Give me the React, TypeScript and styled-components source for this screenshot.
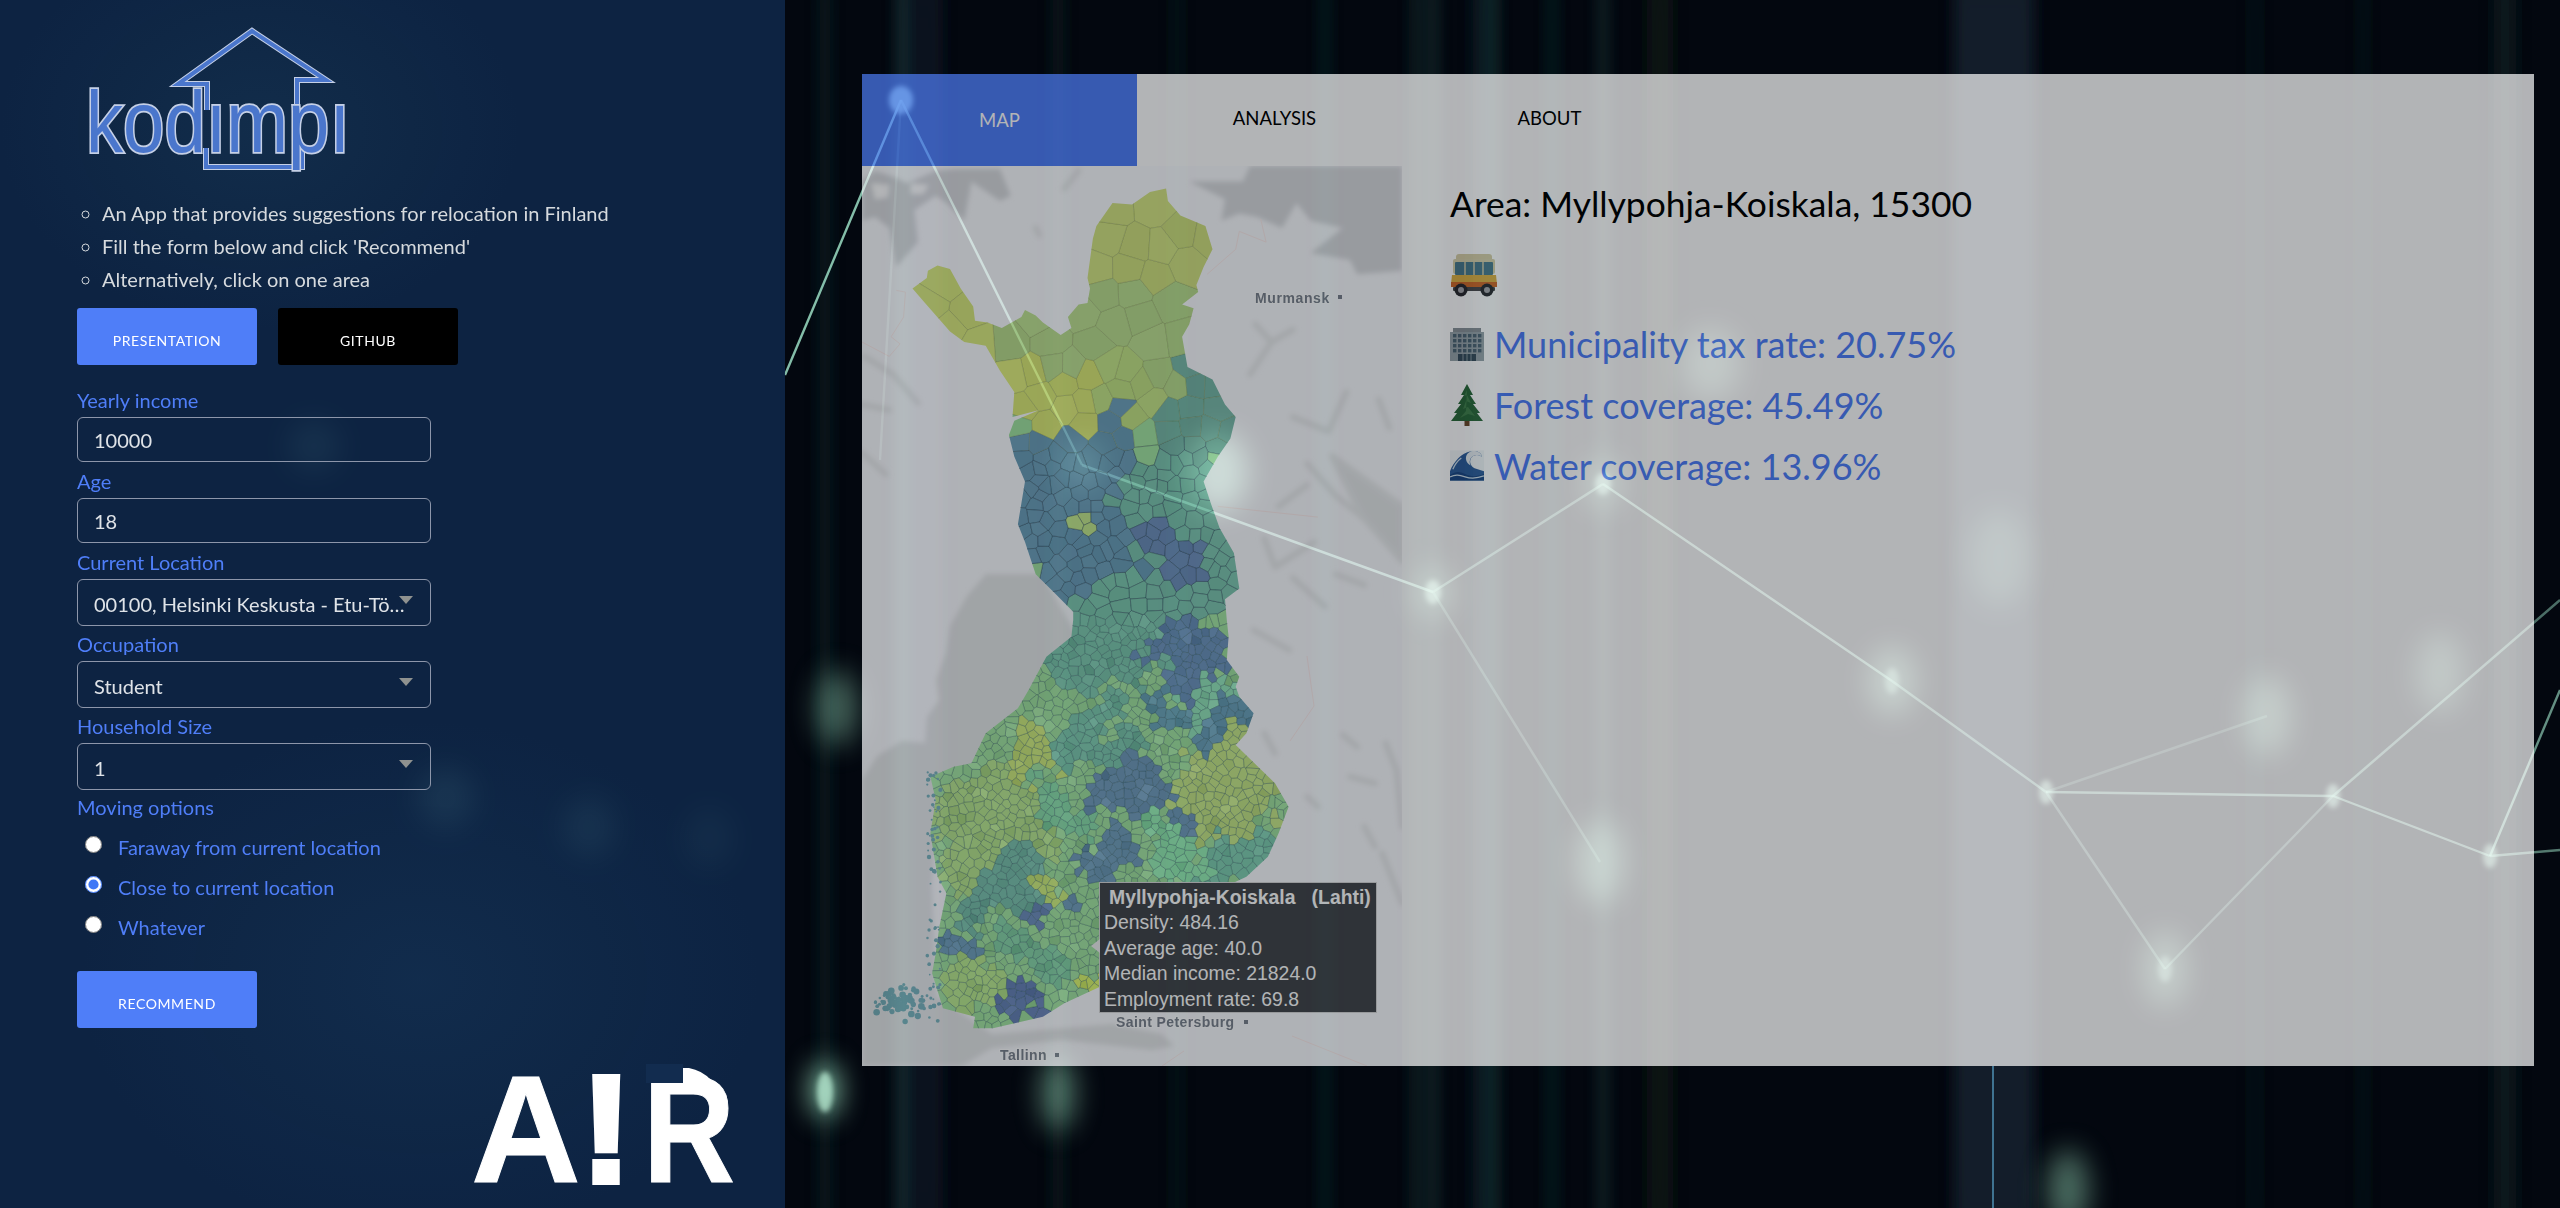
import { FC, ReactNode } from "react";
import styled, { createGlobalStyle } from "styled-components";

const GlobalStyle = createGlobalStyle`
  html, body {
    margin: 0;
    padding: 0;
    background: #03070f;
  }
  body {
    font-family: Lato, "Open Sans", sans-serif;
    overflow: hidden;
  }
`;

const BLUE = "#4f7ef8";

/* ---------- map data ---------- */

type Pt = [number, number];

// coordinates were read off crops of the map, so convert them to map pixels
const north = (p: Pt): Pt => [p[0] / 2.8 - 12, p[1] / 2.8 - 106];
const south = (p: Pt): Pt => [p[0] / 2.8 - 12, p[1] / 3 + 454];

const OUTLINE: Pt[] = [
  ...([
    [175, 640], [215, 610], [218, 590], [245, 575], [280, 585], [310, 640], [345, 690], [350, 730],
    [385, 735], [425, 750], [480, 720], [490, 700], [520, 715], [540, 735], [590, 770], [620, 750],
    [610, 720], [640, 685], [665, 680], [672, 640], [665, 610], [680, 500], [690, 465], [735, 400],
    [790, 405], [840, 370], [885, 360], [890, 395], [925, 435], [995, 465], [1015, 530], [990, 580],
    [970, 630], [975, 650], [930, 685], [962, 695], [950, 740], [930, 775], [945, 860], [1015, 895],
    [1050, 965], [1080, 1000], [1065, 1060], [1030, 1110], [990, 1180], [1010, 1240], [1035, 1310],
    [1075, 1380], [1090, 1480], [1050, 1510], [1055, 1568],
  ] as Pt[]).map(north),
  ...([
    [1060, 50], [1055, 120], [1090, 170], [1080, 200], [1090, 230], [1130, 280], [1110, 340],
    [1080, 375], [1190, 490], [1228, 560], [1200, 640], [1170, 710], [1110, 770], [1050, 800],
    [900, 950], [700, 1100], [600, 1150], [540, 1190], [400, 1225], [345, 1225], [350, 1190],
    [260, 1165], [230, 1060], [240, 1000], [250, 920], [270, 820], [245, 770], [225, 640],
    [240, 540], [225, 470], [290, 440], [340, 430], [380, 340], [470, 265], [500, 210], [550, 110],
    [620, 50], [625, 0],
  ] as Pt[]).map(south),
  ...([
    [625, 1545], [570, 1490], [520, 1440], [490, 1350], [470, 1300], [490, 1180], [460, 1110],
    [445, 1050], [460, 1010], [530, 980], [455, 1000], [460, 930], [420, 870], [380, 800], [320, 790],
    [280, 760], [210, 680],
  ] as Pt[]).map(north),
];

const inOutline = (x: number, y: number) => {
  let inside = false;
  for (let i = 0, j = OUTLINE.length - 1; i < OUTLINE.length; j = i++) {
    const [xi, yi] = OUTLINE[i];
    const [xj, yj] = OUTLINE[j];
    if (yi > y !== yj > y && x < ((xj - xi) * (y - yi)) / (yj - yi) + xi) inside = !inside;
  }
  return inside;
};

let seed = 7;
const rnd = () => {
  seed = (seed * 16807) % 2147483647;
  return seed / 2147483647;
};

// [cx, cy, rx, ry, colour]; a later blob paints over an earlier one
const BLOBS: [number, number, number, number, string][] = [
  [270, 60, 140, 80, "#95a25f"],
  [110, 170, 110, 70, "#99a65c"],
  [260, 170, 110, 48, "#86a06a"],
  [195, 240, 60, 40, "#9da95a"],
  [260, 235, 45, 42, "#8ca464"],
  [340, 250, 52, 52, "#56847a"],
  [215, 345, 78, 95, "#4f7488"],
  [325, 370, 58, 92, "#5a8e80"],
  [305, 385, 26, 28, "#4f6888"],
  [229, 342, 12, 16, "#8aa668"],
  [325, 480, 52, 40, "#4f6c8a"],
  [240, 470, 70, 55, "#5b9180"],
  [340, 530, 30, 22, "#6aa488"],
  [363, 553, 30, 25, "#4f7689"],
  [293, 548, 18, 20, "#507a89"],
  [370, 625, 56, 56, "#8da665"],
  [360, 700, 50, 26, "#5d9582"],
  [175, 590, 28, 36, "#93a95e"],
  [125, 660, 60, 60, "#83a56a"],
  [280, 630, 45, 30, "#527189"],
  [235, 695, 28, 28, "#527389"],
  [305, 680, 30, 28, "#6cab84"],
  [145, 725, 40, 35, "#588b7e"],
  [186, 720, 14, 20, "#93ab5e"],
  [185, 750, 15, 13, "#4f6789"],
  [98, 773, 22, 14, "#517389"],
  [105, 812, 30, 28, "#84a76a"],
  [170, 790, 32, 22, "#62997c"],
  [150, 842, 26, 15, "#4c6187"],
  [222, 815, 15, 14, "#9bb052"],
  [215, 560, 30, 30, "#5d9482"],
  [205, 640, 24, 24, "#65a07e"],
  [255, 590, 24, 18, "#5a907f"],
];

// the panel fades everything to 70%, so undo that for colours picked from the screenshot
const unfade = (hex: string, amount = 0) => {
  const bg = [4, 9, 16];
  const parts = [1, 3, 5].map((i, k) => {
    const v = (parseInt(hex.slice(i, i + 2), 16) - bg[k] * 0.3) / 0.7 + amount;
    return Math.max(0, Math.min(255, Math.round(v)));
  });
  return `rgb(${parts.join(",")})`;
};

const clipCell = (p: Pt, others: Pt[]) => {
  let poly: Pt[] = [[p[0] - 70, p[1] - 70], [p[0] + 70, p[1] - 70], [p[0] + 70, p[1] + 70], [p[0] - 70, p[1] + 70]];
  for (const q of others) {
    if (q === p) continue;
    const dx = q[0] - p[0];
    const dy = q[1] - p[1];
    if (dx * dx + dy * dy > 20000) continue;
    const limit = (dx * (p[0] + q[0])) / 2 + (dy * (p[1] + q[1])) / 2;
    const next: Pt[] = [];
    poly.forEach((a, i) => {
      const b = poly[(i + 1) % poly.length];
      const da = dx * a[0] + dy * a[1] - limit;
      const db = dx * b[0] + dy * b[1] - limit;
      if (da <= 0) next.push(a);
      if (da * db < 0) {
        const t = da / (da - db);
        next.push([a[0] + (b[0] - a[0]) * t, a[1] + (b[1] - a[1]) * t]);
      }
    });
    poly = next;
    if (!poly.length) break;
  }
  return poly;
};

const spacing = (y: number) => (y < 200 ? 30 : y < 290 ? 20 : y < 455 ? 12 : 6.5);

const buildCells = () => {
  const points: Pt[] = [];
  for (let i = 0; i < 40000; i++) {
    const x = rnd() * 430;
    const y = rnd() * 880;
    if (!inOutline(x, y)) continue;
    const r = spacing(y) * (0.75 + rnd() * 0.6);
    if (points.some((q) => (q[0] - x) ** 2 + (q[1] - y) ** 2 < r * r)) continue;
    points.push([x, y]);
  }
  return points.map((p) => {
    // wobble the lookup so the colour patches get ragged edges instead of ellipses
    const jx = p[0] + (rnd() - 0.5) * 12 + 13 * Math.sin(p[1] / 23) + 8 * Math.sin(p[1] / 9 + p[0] / 17);
    const jy = p[1] + (rnd() - 0.5) * 12 + 13 * Math.sin(p[0] / 19) + 8 * Math.cos(p[0] / 8 - p[1] / 21);
    let fill = "#74a376";
    BLOBS.forEach(([cx, cy, rx, ry, c]) => {
      if (((jx - cx) / rx) ** 2 + ((jy - cy) / ry) ** 2 < 1) fill = c;
    });
    const mottled = p[1] > 455 && rnd() < 0.25;
    return {
      d: clipCell(p, points).map((v) => v.map((n) => n.toFixed(1)).join(",")).join(" "),
      fill: unfade(fill, (rnd() - 0.5) * (mottled ? 36 : 8)),
      line: p[1] < 280 ? "rgba(95,115,40,0.3)" : p[1] < 455 ? "rgba(25,55,75,0.5)" : "rgba(25,70,80,0.36)",
    };
  });
};

const CELLS = buildCells();

const ISLANDS = [
  ...Array.from({ length: 110 }, () => {
    const a = rnd() * 6.28;
    const r = rnd() * rnd() + 0.1;
    return { x: 38 + Math.cos(a) * r * 38, y: 836 + Math.sin(a) * r * 20, r: 1 + rnd() * 2.4 };
  }),
  ...Array.from({ length: 70 }, () => {
    const t = rnd();
    return { x: 72 + (rnd() - 0.5) * 14, y: 600 + t * 260, r: 0.8 + rnd() * 1.4 };
  }),
];

const toPath = (pts: Pt[], convert: (p: Pt) => Pt, close = false) =>
  "M" + pts.map(convert).map((p) => p.map((n) => n.toFixed(1)).join(" ")).join("L") + (close ? "Z" : "");

const SEA_NORTH: Pt[] = [
  [950, 340], [1050, 390], [1040, 450], [1090, 430], [1140, 440], [1210, 470], [1250, 400], [1290, 450],
  [1380, 470], [1290, 540], [1400, 560], [1420, 600], [1546, 590], [1546, 297], [1120, 297], [1100, 340],
];
const FJORD_LAND: Pt[] = [
  [34, 340], [70, 310], [130, 330], [160, 345], [240, 310], [300, 305], [420, 305], [450, 380], [420, 395],
  [340, 340], [320, 450], [270, 400], [240, 380], [180, 420], [190, 510], [130, 580], [110, 470], [70, 440], [34, 450],
];
const FJORD_HOLES: Pt[][] = [
  [[60, 345], [110, 350], [105, 385], [70, 390]],
  [[170, 345], [220, 350], [205, 375], [170, 375]],
];
const FJORDS: Pt[][] = [
  [[600, 360], [640, 310]],
  [[520, 470], [530, 490]],
  [[40, 830], [120, 880], [190, 960]],
  [[34, 965], [110, 980]],
  [[34, 1100], [100, 1160]],
  [[1135, 740], [1180, 790], [1240, 755]],
  [[1180, 790], [1120, 880]],
  [[1240, 1000], [1340, 1040], [1390, 930]],
  [[1480, 950], [1510, 1030]],
  [[1280, 1130], [1360, 1220], [1546, 1370]],
  [[1200, 1250], [1280, 1190]],
  [[1160, 1340], [1190, 1420], [1300, 1350]],
  [[1240, 1450], [1330, 1530]],
  [[1360, 1440], [1440, 1470]],
];
const EAST_LAKES: Pt[][] = [
  [[1130, 30], [1230, 90]],
  [[1380, 345], [1420, 380]],
  [[1400, 470], [1470, 490]],
  [[1500, 370], [1530, 450], [1546, 620]],
  [[1440, 620], [1470, 680]],
  [[1490, 700], [1546, 850]],
  [[1160, 340], [1190, 400]],
  [[1280, 530], [1310, 560]],
];
const BORDERS: Pt[][] = [
  [[130, 645], [155, 650], [150, 720], [115, 775], [140, 795], [110, 830], [34, 790]],
  [[1000, 600], [1080, 530], [1090, 480], [1165, 510], [1150, 445]],
  [[1030, 1250], [1310, 1280]],
];

/* ---------- layout ---------- */

const Backdrop = styled.svg`
  position: absolute;
  top: 0;
  left: 0;
`;

const Page = styled.div`
  position: relative;
  z-index: 1;
  display: flex;
  width: 2560px;
  height: 1208px;
`;

const Sidebar = styled.aside`
  display: flex;
  flex-direction: column;
  width: 785px;
  height: 1208px;
  box-sizing: border-box;
  padding: 26px 0 0 77px;
  background:
    radial-gradient(ellipse 260px 200px at 260px 130px, rgba(30, 70, 100, 0.28), transparent),
    radial-gradient(ellipse 340px 260px at 420px 980px, rgba(30, 70, 110, 0.25), transparent),
    rgba(14, 38, 70, 0.93);
`;

const LogoMark = styled.svg`
  display: block;
  margin-left: 8px;
  flex: none;
`;

const IntroList = styled.ul`
  list-style: circle;
  margin: 24.5px 0 12px;
  padding: 0 0 0 25px;
  color: #d6dade;
  font-size: 20px;
  line-height: 33.3px;
`;

const ButtonRow = styled.div`
  display: flex;
  gap: 21px;
`;

const ActionButton = styled.button<{ $dark?: boolean }>`
  width: 180px;
  height: 57px;
  padding: 7px 0 0;
  border: 0;
  border-radius: 3px;
  background: ${(p) => (p.$dark ? "#000" : BLUE)};
  color: #fff;
  font-family: inherit;
  font-size: 14px;
  letter-spacing: 0.6px;
  text-transform: uppercase;
`;

const FieldLabel = styled.label<{ $select?: boolean }>`
  display: block;
  height: ${(p) => (p.$select ? "35px" : "36px")};
  padding-top: ${(p) => (p.$select ? "3px" : "4px")};
  box-sizing: border-box;
  color: ${BLUE};
  font-size: 20px;
  line-height: 30px;
`;

const FormGroup = styled.div`
  margin-top: 24px;
  & > label:first-child {
    height: 28px;
    padding-top: 0;
    line-height: 23px;
  }
`;

const TextBox = styled.input`
  display: block;
  width: 354px;
  height: 45px;
  box-sizing: border-box;
  padding: 0 16px;
  border: 1px solid #8d96aa;
  border-radius: 6px;
  background: transparent;
  color: #dfe3e8;
  font-family: inherit;
  font-size: 20px;
  outline: none;
`;

const SelectBox = styled.div`
  position: relative;
  width: 354px;
  height: 47px;
  box-sizing: border-box;
  padding: 4px 16px 0;
  border: 1px solid #8d96aa;
  border-radius: 6px;
  color: #dfe3e8;
  font-size: 20px;
  line-height: 41px;
  &::after {
    content: "";
    position: absolute;
    top: 16px;
    right: 17px;
    border-style: solid;
    border-width: 8px 7px 0;
    border-color: #8f9290 transparent transparent;
  }
`;

const SelectValue = styled.div`
  white-space: nowrap;
  overflow: hidden;
  text-overflow: ellipsis;
`;

const MovingLabel = styled.div`
  height: 38px;
  color: ${BLUE};
  font-size: 20px;
  line-height: 34px;
`;

const RadioRow = styled.label`
  display: flex;
  align-items: center;
  gap: 16px;
  height: 40px;
  padding: 0 0 2px 8px;
  box-sizing: border-box;
  color: ${BLUE};
  font-size: 20px;
`;

const RadioDot = styled.input`
  width: 17px;
  height: 17px;
  margin: 0 0 6px;
  accent-color: #3f78f6;
`;

const RecommendButton = styled(ActionButton)`
  margin-top: 23px;
  flex: none;
`;

const AirLogo = styled.svg`
  display: block;
  margin: 36px 0 0 389px;
  flex: none;
`;

const Main = styled.main`
  flex: 1;
  padding: 74px 26px 0 77px;
`;

const Panel = styled.section`
  height: 992px;
  background: #fff;
  opacity: 0.7;
`;

const TabBar = styled.nav`
  display: flex;
  height: 92px;
`;

const Tab = styled.div<{ $active?: boolean }>`
  display: flex;
  align-items: center;
  justify-content: center;
  width: 275px;
  padding-bottom: ${(p) => (p.$active ? "0" : "4px")};
  box-sizing: border-box;
  background: ${(p) => (p.$active ? BLUE : "transparent")};
  color: ${(p) => (p.$active ? "#fff" : "#000")};
  font-size: 18.5px;
`;

const Content = styled.div`
  display: flex;
  height: 900px;
`;

const MapPane = styled.div`
  position: relative;
  flex: none;
  width: 540px;
  height: 900px;
  overflow: hidden;
  background: #fbfcff;
  svg {
    display: block;
  }
`;

const Tooltip = styled.div`
  position: absolute;
  left: 237px;
  top: 716px;
  width: 278px;
  height: 131px;
  box-sizing: border-box;
  padding: 2px 0 0 4px;
  border: 1px solid #d8d8d8;
  background: #44474b;
  color: #fff;
  font-family: "Liberation Sans", Arial, sans-serif;
  font-size: 19.4px;
  line-height: 25.4px;
  &::before {
    content: "";
    position: absolute;
    left: -9px;
    top: 56px;
    border-style: solid;
    border-width: 7px 9px 7px 0;
    border-color: transparent #f0f0f0 transparent transparent;
  }
`;

const TooltipTitle = styled.div`
  padding-left: 5px;
  font-weight: 700;
  white-space: pre;
`;

const Details = styled.div`
  padding: 16px 0 0 48px;
`;

const AreaTitle = styled.h2`
  margin: 0;
  height: 42px;
  color: #000;
  font-size: 35.4px;
  font-weight: 400;
  line-height: 44px;
`;

const BusSlot = styled.div`
  margin: 29px 0 16px;
  height: 44px;
  svg {
    display: block;
  }
`;

const StatRow = styled.div`
  display: flex;
  align-items: center;
  gap: 10px;
  height: 61px;
  color: ${BLUE};
  font-size: 36px;
  svg {
    flex: none;
  }
`;

/* ---------- drawings ---------- */

const Network: FC = () => {
  const lines: [number, number, number, number, number][] = [
    [901, 100, 1082, 465, 0.55], [1082, 465, 1433, 592, 0.6], [901, 100, 785, 375, 0.8],
    [901, 100, 1010, 320, 0.22], [901, 100, 880, 460, 0.16],
    [1433, 592, 1603, 484, 0.4], [1603, 484, 1892, 681, 0.5], [1892, 681, 2046, 792, 0.45], [2046, 792, 2333, 796, 0.5],
    [2333, 796, 2490, 856, 0.5], [2046, 792, 2165, 969, 0.3], [2333, 796, 2165, 969, 0.3], [2333, 796, 2560, 600, 0.45],
    [2490, 856, 2560, 690, 0.6], [2490, 856, 2560, 850, 0.5], [1433, 592, 1600, 862, 0.25], [2046, 792, 2267, 716, 0.22],
  ];
  const streaks: [number, number, string, number][] = [
    [825, 12, "#17453f", 0.32],
    [920, 46, "#122f3c", 0.35],
    [1058, 12, "#163f37", 0.28],
    [1177, 7, "#12302a", 0.45],
    [1325, 7, "#1a453c", 0.5],
    [1416, 7, "#1f5046", 0.5],
    [1484, 22, "#16333a", 0.45],
    [1495, 5, "#255f52", 0.5],
    [1552, 7, "#1a453c", 0.5],
    [1660, 26, "#10211a", 0.5],
    [1994, 80, "#1a2f3a", 0.6],
    [2255, 6, "#16322a", 0.5],
    [2363, 5, "#183a2c", 0.5],
    [2505, 22, "#13282c", 0.55],
    [901, 8, "#3a7a70", 0.3],
    [1433, 10, "#3a7a6a", 0.28],
    [1603, 10, "#3a7a6a", 0.25],
  ];
  const glows: [number, number, number, number, number][] = [
    [1218, 472, 30, 40, 0.6], [1600, 862, 24, 42, 0.42], [2267, 716, 24, 40, 0.36], [2440, 673, 24, 40, 0.3],
    [1999, 558, 30, 48, 0.22], [1711, 364, 30, 36, 0.3], [1892, 681, 24, 34, 0.4], [2165, 969, 22, 38, 0.36],
    [837, 708, 20, 38, 0.4], [1058, 1093, 16, 38, 0.5], [2068, 1190, 20, 40, 0.45], [1433, 592, 20, 26, 0.35],
    [1603, 484, 20, 26, 0.32], [314, 446, 26, 26, 0.75], [446, 798, 28, 30, 0.9], [589, 827, 26, 30, 0.75],
    [709, 838, 24, 30, 0.5], [1082, 465, 20, 24, 0.4], [825, 1090, 13, 28, 0.85],
  ];
  const nodes: [number, number, number, number, number][] = [
    [1433, 592, 8, 12, 0.6], [1603, 484, 8, 11, 0.55], [1892, 681, 7, 13, 0.4], [2046, 792, 7, 12, 0.55],
    [2333, 796, 7, 12, 0.55], [2490, 856, 7, 12, 0.55], [2165, 969, 7, 13, 0.4], [825, 1092, 8, 20, 0.7], [901, 100, 12, 14, 0.8],
  ];
  return (
    <Backdrop width={2560} height={1208} viewBox="0 0 2560 1208">
      <defs>
        <filter id="streak" x="-300%" y="-20%" width="700%" height="140%">
          <feGaussianBlur stdDeviation="7 40" />
        </filter>
        <filter id="glow" x="-100%" y="-100%" width="300%" height="300%">
          <feGaussianBlur stdDeviation="14" />
        </filter>
        <filter id="soft" x="-100%" y="-100%" width="300%" height="300%">
          <feGaussianBlur stdDeviation="2.5" />
        </filter>
        <filter id="faint" x="-5%" y="-5%" width="110%" height="110%">
          <feGaussianBlur stdDeviation="0.5" />
        </filter>
      </defs>
      <rect width={2560} height={1208} fill="#03070f" />
      <g filter="url(#streak)">
        {streaks.map(([x, w, c, o]) => (
          <rect key={x} x={x - w / 2} y={-60} width={w} height={1330} fill={c} opacity={o} />
        ))}
      </g>
      <rect x={1992} y={1066} width={2} height={142} fill="#3f7391" />
      <g stroke="#a5ecd0" strokeWidth={2.4}>
        {lines.map(([a, b, c, d, o]) => (
          <line key={`${a}-${b}-${c}-${d}`} x1={a} y1={b} x2={c} y2={d} opacity={o} />
        ))}
      </g>
      <g filter="url(#glow)" fill="#a8f0cc">
        {glows.map(([x, y, rx, ry, o]) => (
          <ellipse key={`${x}-${y}`} cx={x} cy={y} rx={rx} ry={ry} opacity={o} />
        ))}
      </g>
      <g filter="url(#soft)" fill="#c0f5dc">
        {nodes.map(([x, y, rx, ry, o]) => (
          <ellipse key={`${x}-${y}`} cx={x} cy={y} rx={rx} ry={ry} opacity={o} />
        ))}
      </g>
    </Backdrop>
  );
};

const KodimpiLogo: FC = () => (
  <LogoMark width={268} height={146} viewBox="0 0 268 146">
    <g fill="none" strokeLinejoin="miter">
      <path d="M122 84V58H93L167 5L241 54H212V78M121 122V141H217V118" stroke="#c5d0e6" strokeWidth={6} />
      <path d="M122 84V58H93L167 5L241 54H212V78M121 122V141H217V118" stroke="#4a76cc" strokeWidth={4} />
    </g>
    <text
      x={1}
      y={126}
      fontFamily="'Liberation Sans', Arial, sans-serif"
      fontSize={88}
      fill="#4a76cc"
      stroke="#c5d0e6"
      strokeWidth={3.6}
      paintOrder="stroke"
      textLength={264}
      lengthAdjust="spacingAndGlyphs"
    >
      kodımpı
    </text>
  </LogoMark>
);

const AirMark: FC = () => (
  <AirLogo width={270} height={122} viewBox="0 0 270 122">
    <g fill="#fff" stroke="#fff" fontFamily="'Liberation Sans', Arial, sans-serif" fontWeight={700} fontSize={152}>
      <text x={5} y={118} strokeWidth={1}>A</text>
      <text x={115} y={118} strokeWidth={6} strokeLinejoin="miter">!</text>
      <text x={177} y={118} strokeWidth={1} textLength={92} lengthAdjust="spacingAndGlyphs">R</text>
    </g>
    <rect x={180} y={0} width={37} height={19} fill="#122c4f" />
    <path d="M217 4h6a40 40 0 0 1 22 12h-28z" fill="#fff" />
  </AirLogo>
);

const BusIcon: FC = () => (
  <svg width={48} height={44} viewBox="0 0 48 44">
    <path d="M9 1h30q3 0 3 3v4H6V4q0-3 3-3z" fill="#d8d0a8" />
    <rect x={3} y={6} width={42} height={15} rx={2} fill="#d9d2ac" />
    <rect x={5} y={9} width={38} height={13} rx={1} fill="#4b7b8f" />
    <path d="M15 9v13M24 9v13M33 9v13" stroke="#d9d2ac" strokeWidth={1.4} />
    <path d="M2 22h44l1 9H1z" fill="#dfb245" />
    <rect x={1} y={29} width={46} height={5} fill="#d06a2a" />
    <rect x={3} y={34} width={42} height={4} rx={1} fill="#4a4a4c" />
    <circle cx={11} cy={37} r={6.5} fill="#2c2c30" />
    <circle cx={11} cy={37} r={3} fill="#a8a8ac" />
    <circle cx={37} cy={37} r={6.5} fill="#2c2c30" />
    <circle cx={37} cy={37} r={3} fill="#a8a8ac" />
  </svg>
);

const BuildingIcon: FC = () => {
  const cols = [3, 8, 13, 18, 23, 28];
  const rows = [7, 12, 17, 22];
  return (
    <svg width={34} height={34} viewBox="0 0 34 34">
      <rect x={3} y={1} width={28} height={5} fill="#8c949a" />
      <rect x={0} y={5} width={34} height={29} fill="#9aa6ac" />
      {rows.map((y) =>
        cols.map((x) => <rect key={`${x}-${y}`} x={x} y={y} width={3.4} height={3.4} fill="#4e6675" />)
      )}
      <rect x={8} y={27} width={18} height={7} fill="#38505e" />
      <path d="M13 27v7M17 27v7M21 27v7" stroke="#a4b0b6" strokeWidth={0.8} />
    </svg>
  );
};

const TreeIcon: FC = () => (
  <svg width={34} height={42} viewBox="0 0 34 42">
    <rect x={14.5} y={35} width={5} height={7} fill="#6e4a2c" />
    <path d="M17 0l6 11h-3l6 9h-3l7 9h-3l6 8H1l6-8H4l7-9H8l6-9h-3z" fill="#2c6a3a" />
    <path d="M17 6l-3 6 3-1 4 8-5-2-3 8 5-2 7 9-7-2-8 4 6-7" fill="#4f8f56" opacity={0.7} />
  </svg>
);

const WaveIcon: FC = () => (
  <svg width={34} height={31} viewBox="0 0 36 32">
    <rect width={36} height={32} fill="#d9e4ea" opacity={0.35} />
    <path d="M0 32V22C4 12 12 3 22 1c6-1 11 1 12 6-3-3-8-3-11 0-3 4-2 9 3 12l10 3v10z" fill="#2f5f9c" />
    <path d="M22 1c6-1 11 1 12 6-3-3-8-3-11 0-2 2-3 6-1 9-5-2-7-9-3-13z" fill="#e8eef2" />
    <path d="M0 26c6-4 10-4 16-1s12 3 20 0v7H0z" fill="#1d4a86" />
    <path d="M0 28c6-3 10-2 16 0s12 2 20-1M3 20c2-5 5-9 9-12" stroke="#cfe0ec" strokeWidth={1.3} fill="none" />
  </svg>
);

const FinlandMap: FC = () => (
  <svg width={540} height={900} viewBox="0 0 540 900">
    <defs>
      <clipPath id="finland">
        <path d={toPath(OUTLINE, (p) => p, true)} />
      </clipPath>
    </defs>
    <g filter="url(#soft)">
      <path
        d="M0 614L15 590L40 575L63 577L65 551L77 534L74 514L84 487L88 460L105 430L124 408L180 408L215 470L180 530L125 600L75 650L70 720L75 830L130 868L250 858L300 868L312 880L290 884L200 874L130 882L100 900L0 900Z"
        fill={unfade("#a2a5a8")}
      />
      <path d={toPath(SEA_NORTH, north, true)} fill={unfade("#9a9da1")} />
      <path d={toPath(FJORD_LAND, north, true)} fill={unfade("#9a9da1")} />
      {FJORD_HOLES.map((f, i) => (
        <path key={i} d={toPath(f, north, true)} fill={unfade("#b6b8bb")} />
      ))}
      <g fill="none" stroke={unfade("#a5a8ab")} strokeWidth={6} strokeLinejoin="round" strokeLinecap="round">
        {FJORDS.map((f, i) => (
          <path key={i} d={toPath(f, north)} />
        ))}
        {EAST_LAKES.map((f, i) => (
          <path key={i} d={toPath(f, south)} />
        ))}
        <path d="M470 290L540 340L540 395L500 350Z" fill={unfade("#a2a5a8")} />
      </g>
    </g>
    <g fill="none" stroke={unfade("#b9a9ab")} strokeWidth={1}>
      {BORDERS.map((b, i) => (
        <path key={i} d={toPath(b, north)} />
      ))}
      <path d="M445 490L452 540L428 575M300 900L322 885M430 870L505 900" />
    </g>
    <g filter="url(#faint)">
      <g clipPath="url(#finland)" strokeWidth={0.7}>
        {CELLS.map((c, i) => (
          <polygon key={i} points={c.d} fill={c.fill} stroke={c.line} />
        ))}
      </g>
      <g fill={unfade("#567f88")}>
        {ISLANDS.map((d, i) => (
          <circle key={i} cx={d.x} cy={d.y} r={d.r} />
        ))}
      </g>
    </g>
    <g fontFamily="'Liberation Sans', Arial, sans-serif" fontWeight={700} fontSize={14} fill="#7c838e" stroke="#fff" strokeWidth={2} paintOrder="stroke">
      <text x={393} y={137} letterSpacing={0.6}>Murmansk</text>
      <text x={254} y={861} letterSpacing={0.4}>Saint Petersburg</text>
      <text x={138} y={894} letterSpacing={0.4}>Tallinn</text>
    </g>
    <g fill="#7c838e">
      <rect x={476} y={129} width={4} height={4} />
      <rect x={382} y={854} width={4} height={4} />
      <rect x={193} y={887} width={4} height={4} />
    </g>
  </svg>
);

const Stat: FC<{ icon: ReactNode; children: ReactNode }> = ({ icon, children }) => (
  <StatRow>
    {icon}
    <span>{children}</span>
  </StatRow>
);

const MOVING_OPTIONS = ["Faraway from current location", "Close to current location", "Whatever"];

const App: FC = () => {
  return (
    <>
      <GlobalStyle />
      <Network />
      <Page>
        <Sidebar>
          <KodimpiLogo />
          <IntroList>
            <li>An App that provides suggestions for relocation in Finland</li>
            <li>Fill the form below and click 'Recommend'</li>
            <li>Alternatively, click on one area</li>
          </IntroList>
          <ButtonRow>
            <ActionButton>Presentation</ActionButton>
            <ActionButton $dark>Github</ActionButton>
          </ButtonRow>
          <FormGroup>
            <FieldLabel>Yearly income</FieldLabel>
            <TextBox defaultValue="10000" />
            <FieldLabel>Age</FieldLabel>
            <TextBox defaultValue="18" />
            <FieldLabel>Current Location</FieldLabel>
            <SelectBox>
              <SelectValue>00100, Helsinki Keskusta - Etu-Töölö</SelectValue>
            </SelectBox>
            <FieldLabel $select>Occupation</FieldLabel>
            <SelectBox>
              <SelectValue>Student</SelectValue>
            </SelectBox>
            <FieldLabel $select>Household Size</FieldLabel>
            <SelectBox>
              <SelectValue>1</SelectValue>
            </SelectBox>
          </FormGroup>
          <MovingLabel>Moving options</MovingLabel>
          {MOVING_OPTIONS.map((option, i) => (
            <RadioRow key={option}>
              <RadioDot type="radio" name="moving" defaultChecked={i === 1} />
              {option}
            </RadioRow>
          ))}
          <RecommendButton>Recommend</RecommendButton>
          <AirMark />
        </Sidebar>
        <Main>
          <Panel>
            <TabBar>
              <Tab $active>MAP</Tab>
              <Tab>ANALYSIS</Tab>
              <Tab>ABOUT</Tab>
            </TabBar>
            <Content>
              <MapPane>
                <FinlandMap />
                <Tooltip>
                  <TooltipTitle>{"Myllypohja-Koiskala   (Lahti)"}</TooltipTitle>
                  <div>Density: 484.16</div>
                  <div>Average age: 40.0</div>
                  <div>Median income: 21824.0</div>
                  <div>Employment rate: 69.8</div>
                </Tooltip>
              </MapPane>
              <Details>
                <AreaTitle>Area: Myllypohja-Koiskala, 15300</AreaTitle>
                <BusSlot>
                  <BusIcon />
                </BusSlot>
                <Stat icon={<BuildingIcon />}>Municipality tax rate: 20.75%</Stat>
                <Stat icon={<TreeIcon />}>Forest coverage: 45.49%</Stat>
                <Stat icon={<WaveIcon />}>Water coverage: 13.96%</Stat>
              </Details>
            </Content>
          </Panel>
        </Main>
      </Page>
    </>
  );
};

export default App;
